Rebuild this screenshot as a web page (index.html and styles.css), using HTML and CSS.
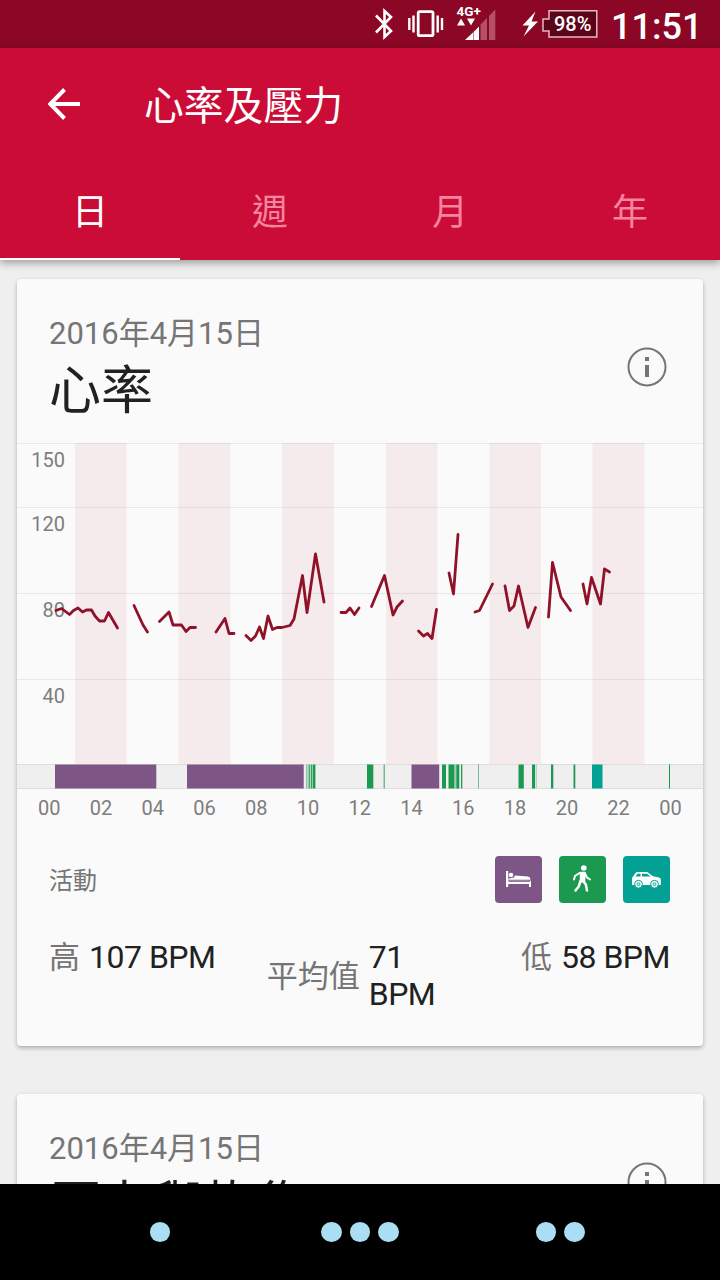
FILE: index.html
```
<!DOCTYPE html>
<html lang="zh-Hant">
<head>
    <meta charset="UTF-8">
    <meta name="viewport" content="width=device-width, initial-scale=1.0">
    <title>心率及壓力</title>
    <link rel="stylesheet" href="styles.css">
</head>
<body>
    <div class="screen">
        <div class="status-bar">
            <svg class="status-icons" width="240" height="48" viewBox="360 0 240 48">
                <!-- bluetooth -->
                <path d="M376 15.5L391 31L384.5 37V11L391 17L376 32.5" fill="none" stroke="#fff" stroke-width="2.6"/>
                <!-- vibrate -->
                <rect x="418.2" y="11.7" width="14.8" height="24" rx="1.5" fill="none" stroke="#fff" stroke-width="2.8"/>
                <path d="M409.3 18v12M413.5 15.5v17M437.7 15.5v17M442 18v12" stroke="#fff" stroke-width="2.4"/>
                <!-- mobile signal -->
                <text x="456.5" y="16" class="network">4G+</text>
                <path d="M457 25.5l4-7 4 7zM467 18.5h8l-4 7z" fill="#fff"/>
                <path d="M465 40l8-7.5V40zM473.5 32l5.500-5.500V40h-5.500z" fill="#fff"/>
                <path d="M480.500 24.500l6.500-6.500V40h-6.500zM489 16l6.300-6.500V40H489z" fill="#b55067"/>
                <!-- battery -->
                <path d="M535.500 11.500L522.500 25.500h6.500l-5.500 11 14.500-15h-6.500z" fill="#fff"/>
                <path d="M549 10.700H596.800V37H549V31H543V19H549z" fill="#5c0519" stroke="#e3b9c3" stroke-width="1.500"/>
                <text x="554" y="31" class="battery">98%</text>
            </svg>
            <span class="clock">11:51</span>
        </div>

        <header class="app-bar">
            <div class="toolbar">
                <svg class="back" width="32" height="32" viewBox="0 0 32 32">
                    <path d="M32 16H3M16.500 1.500L2.200 16l14.300 14.500" fill="none" stroke="#fff" stroke-width="4"/>
                </svg>
                <h1>心率及壓力</h1>
            </div>
            <nav class="tabs">
                <div class="tab active">日</div>
                <div class="tab">週</div>
                <div class="tab">月</div>
                <div class="tab">年</div>
            </nav>
        </header>

        <main class="content">
            <section class="card">
                <div class="card-header">
                    <div>
                        <p class="date">2016年4月15日</p>
                        <h2>心率</h2>
                    </div>
                    <svg class="info" width="40" height="40" viewBox="0 0 40 40">
                        <circle cx="20" cy="20" r="18.500" fill="none" stroke="#757575" stroke-width="2"/>
                        <path d="M18 10h4v4h-4zM18 18h4v12h-4z" fill="#757575"/>
                    </svg>
                </div>

                <svg class="chart" width="686" height="384" viewBox="17 442 686 384">
                    <!-- two-hour bands -->
                    <g fill="#f5ebec">
                        <rect x="75" y="443" width="51.700" height="321"/>
                        <rect x="178.500" y="443" width="52" height="321"/>
                        <rect x="282" y="443" width="52" height="321"/>
                        <rect x="386" y="443" width="51.300" height="321"/>
                        <rect x="489.300" y="443" width="51.700" height="321"/>
                        <rect x="592.500" y="443" width="52" height="321"/>
                    </g>
                    <rect x="17" y="764" width="686" height="25" fill="#efefef"/>
                    <path d="M17 443.500H703M17 507.500H703M17 593.500H703M17 679.500H703M17 764.500H703M17 788.500H703" stroke="#000" stroke-opacity=".07"/>

                    <g class="axis" text-anchor="end">
                        <text x="65" y="467">150</text>
                        <text x="65" y="531">120</text>
                        <text x="65" y="617">80</text>
                        <text x="65" y="702.500">40</text>
                    </g>

                    <!-- heart rate, broken where there is no reading -->
                    <g class="rate">
                        <polyline points="56,610.500 61.500,608.500 69.500,614.500 73.500,610.500 78,608 82.500,612 86.500,610 91.500,610 95,616 99.500,621 104.500,621 108.500,612.500 117.500,628"/>
                        <polyline points="134,605.500 143,625 147.500,632"/>
                        <polyline points="159.500,621.500 169,612 173,625 181.500,625 186,631.500 190,627.500 195.500,627.500"/>
                        <polyline points="216,632 225,618.500 229,633.500 234,633.500"/>
                        <polyline points="246,635.500 251,640.500 255.500,636 259.500,627 263.500,638.500 268,616 272.500,629.500 277,627.500 282,627.500 290,625.500 294,619 302.500,575.500 307,612.500 315.500,554 324,602"/>
                        <polyline points="341,612.500 346,612.500 350,608 354.500,614.500 359,608"/>
                        <polyline points="371.500,606.500 384.500,575.500 393,615 397,607 402.500,601"/>
                        <polyline points="418.500,631 423.500,636 427.500,633.500 432,638.500 436.500,609.500"/>
                        <polyline points="449,573 453.500,594 458,534.500"/>
                        <polyline points="475,612 479.500,610.500 492.500,584"/>
                        <polyline points="505,586 509.500,610.500 514,606 518.500,586 528,627.500 535.500,607.500"/>
                        <polyline points="548.500,617 552.500,562.500 561,597 570.500,610.500"/>
                        <polyline points="583,584 587,604 591.500,577.500 600.500,604 604.500,569 609.500,572"/>
                    </g>

                    <!-- activity strip -->
                    <g fill="#7e5685">
                        <rect x="55" y="764.500" width="101.300" height="24"/>
                        <rect x="187" y="764.500" width="116.700" height="24"/>
                        <rect x="411.500" y="764.500" width="27.700" height="24"/>
                    </g>
                    <g fill="#1c9950">
                        <rect x="306" y="764.500" width="1.500" height="24" opacity=".5"/>
                        <rect x="308.500" y="764.500" width="1.500" height="24" opacity=".8"/>
                        <rect x="310.700" y="764.500" width="1.500" height="24" opacity=".9"/>
                        <rect x="312.700" y="764.500" width="2.300" height="24"/>
                        <rect x="315" y="764.500" width=".8" height="24" opacity=".5"/>
                        <rect x="367" y="764.500" width="6.300" height="24"/>
                        <rect x="383.500" y="764.500" width="1.500" height="24" opacity=".6"/>
                        <rect x="442" y="764.500" width="4" height="24"/>
                        <rect x="448.500" y="764.500" width="5.800" height="24"/>
                        <rect x="454.300" y="764.500" width="2" height="24" opacity=".4"/>
                        <rect x="456.300" y="764.500" width="3" height="24"/>
                        <rect x="461" y="764.500" width="1.300" height="24"/>
                        <rect x="478" y="764.500" width="1" height="24" opacity=".6"/>
                        <rect x="518.500" y="764.500" width="5.300" height="24"/>
                        <rect x="532" y="764.500" width="3" height="24"/>
                        <rect x="535.500" y="764.500" width="1.500" height="24" opacity=".3"/>
                        <rect x="551" y="764.500" width="2.300" height="24"/>
                        <rect x="573.500" y="764.500" width="1.800" height="24"/>
                        <rect x="669" y="764.500" width="1" height="24"/>
                    </g>
                    <rect x="592" y="764.500" width="10.500" height="24" fill="#02a194"/>

                    <g class="axis" text-anchor="middle">
                        <text x="49.200" y="815">00</text>
                        <text x="101" y="815">02</text>
                        <text x="152.700" y="815">04</text>
                        <text x="204.500" y="815">06</text>
                        <text x="256.300" y="815">08</text>
                        <text x="308" y="815">10</text>
                        <text x="359.800" y="815">12</text>
                        <text x="411.600" y="815">14</text>
                        <text x="463.300" y="815">16</text>
                        <text x="515.100" y="815">18</text>
                        <text x="566.900" y="815">20</text>
                        <text x="618.600" y="815">22</text>
                        <text x="670.400" y="815">00</text>
                    </g>
                </svg>

                <div class="activity">
                    <span class="activity-label">活動</span>
                    <div class="legend">
                        <div class="badge sleep">
                            <svg width="47" height="47" viewBox="0 0 47 47" fill="#fff">
                                <path d="M11 15h2.200v9.800H36V31h-2v-3H13.200v3H11z"/>
                                <circle cx="16" cy="19" r="2.300"/>
                                <path d="M13.200 22.800l5.800-1.300 1-2 13 1q2.500.5 2.500 3.300H13.200z"/>
                                <path d="M13.500 25.500H35" stroke="#7e5685" stroke-width=".8"/>
                            </svg>
                        </div>
                        <div class="badge walk">
                            <svg width="47" height="47" viewBox="0 0 47 47" fill="none" stroke="#fff" stroke-linecap="round" stroke-linejoin="round">
                                <circle cx="24.800" cy="12" r="2.800" fill="#fff" stroke="none"/>
                                <path d="M21.500 16.500h4.500l-.5 9-4 .5z" fill="#fff" stroke-width="1.500"/>
                                <path d="M20.500 17L16 20l-1 3.500M26 17.500l2 4 3 2" stroke-width="2"/>
                                <path d="M21.500 25l-1.800 5.500-3.200 4M24.500 25l2.500 4 1 5.500" stroke-width="2.500"/>
                            </svg>
                        </div>
                        <div class="badge drive">
                            <svg width="47" height="47" viewBox="0 0 47 47">
                                <path d="M9 22l3.500-5q.7-.9 1.700-.9h9.300q1 0 2 .8l4.500 3.300 6 1.200q1.800.4 1.800 2V29H9z" fill="#fff"/>
                                <path d="M12.500 20.500l2-2.800h3v2.800zM19 17.700h5l3.500 2.800H19z" fill="#02a194"/>
                                <g fill="#fff" stroke="#02a194" stroke-width="1">
                                    <circle cx="15.500" cy="28.200" r="3.900"/>
                                    <circle cx="31.500" cy="28.200" r="3.900"/>
                                    <circle cx="15.500" cy="28.200" r="1.400"/>
                                    <circle cx="31.500" cy="28.200" r="1.400"/>
                                </g>
                            </svg>
                        </div>
                    </div>
                </div>

                <div class="stats">
                    <div class="stat">
                        <span class="stat-label">高</span>
                        <span class="stat-value">107 BPM</span>
                    </div>
                    <div class="stat average">
                        <span class="stat-label">平均值</span>
                        <span class="stat-value">71 BPM</span>
                    </div>
                    <div class="stat">
                        <span class="stat-label">低</span>
                        <span class="stat-value">58 BPM</span>
                    </div>
                </div>
            </section>

            <section class="card">
                <div class="card-header">
                    <div>
                        <p class="date">2016年4月15日</p>
                        <h2>壓力與恢復</h2>
                    </div>
                    <svg class="info" width="40" height="40" viewBox="0 0 40 40">
                        <circle cx="20" cy="20" r="18.500" fill="none" stroke="#757575" stroke-width="2"/>
                        <path d="M18 10h4v4h-4zM18 18h4v12h-4z" fill="#757575"/>
                    </svg>
                </div>
            </section>
        </main>

        <footer class="nav-bar">
            <div class="dots"><i></i></div>
            <div class="dots"><i></i><i></i><i></i></div>
            <div class="dots"><i></i><i></i></div>
        </footer>
    </div>
</body>
</html>
```
FILE: styles.css
```
* {
    box-sizing: border-box;
}
body {
    margin: 0;
    background-color: #efefef;
    font-family: Roboto, "Noto Sans CJK TC", sans-serif;
    color: #212121;
}
h1, h2, p {
    margin: 0;
    font-weight: 400;
}
svg {
    display: block;
    flex: none;
}
.screen {
    display: flex;
    flex-direction: column;
    width: 720px;
    height: 1280px;
    overflow: hidden;
}
.status-bar {
    display: flex;
    justify-content: flex-end;
    height: 48px;
    padding-right: 18px;
    background-color: #8b0725;
    color: #fff;
    flex: none;
}
.network {
    font-size: 13.5px;
    font-weight: 700;
    fill: #fff;
}
.battery {
    font-size: 20px;
    font-weight: 500;
    fill: #fff;
}
.clock {
    width: 102px;
    padding-left: 11px;
    font-size: 36px;
    font-weight: 500;
    line-height: 54px;
    white-space: nowrap;
}
.app-bar {
    height: 212px;
    background-color: #ca0c36;
    color: #fff;
    box-shadow: 0 3px 8px rgba(0, 0, 0, 0.35);
    flex: none;
    z-index: 1;
}
.toolbar {
    display: flex;
    align-items: center;
    height: 112px;
    padding-left: 48px;
    gap: 64px;
}
h1 {
    padding-top: 5px;
    font-size: 39.8px;
    line-height: 48px;
}
.tabs {
    display: grid;
    grid-template-columns: repeat(4, 1fr);
    height: 100px;
}
.tab {
    padding-top: 27px;
    border-bottom: 2px solid transparent;
    text-align: center;
    font-size: 36px;
    line-height: 52px;
    color: #f4859f;
}
.tab.active {
    color: #fff;
    border-color: #fff;
}
.content {
    display: flex;
    flex-direction: column;
    gap: 48px;
    flex: 1;
    min-height: 0;
    padding: 19px 17px 0;
    overflow: hidden;
}
.card {
    flex: none;
    height: 767px;
    border-radius: 4px;
    background-color: #fafafa;
    box-shadow: 0 2px 4px rgba(0, 0, 0, 0.28);
}
.card-header {
    display: flex;
    justify-content: space-between;
    height: 163px;
    padding: 35px 36.5px 0 32px;
}
.date {
    font-size: 31px;
    line-height: 40px;
    color: #757575;
}
h2 {
    padding-top: 2px;
    font-size: 52px;
    line-height: 72px;
}
.info {
    margin-top: 33px;
}
.axis {
    font-size: 20px;
    fill: #7d7d7d;
}
.rate {
    fill: none;
    stroke: #901229;
    stroke-width: 2.8;
    stroke-linecap: round;
    stroke-linejoin: round;
}
.activity {
    display: flex;
    align-items: center;
    justify-content: space-between;
    height: 47px;
    margin: 30px 33px 0 32px;
}
.activity-label {
    padding-bottom: 2px;
    font-size: 24px;
    color: #757575;
}
.legend {
    display: flex;
    gap: 17px;
}
.badge {
    width: 47px;
    height: 47px;
    border-radius: 4px;
}
.sleep {
    background-color: #7e5685;
}
.walk {
    background-color: #1c9950;
}
.drive {
    background-color: #02a194;
}
.stats {
    display: flex;
    justify-content: space-between;
    align-items: flex-start;
    padding: 36px 33px 0 32px;
}
.stat {
    display: flex;
    align-items: center;
    gap: 9px;
}
.stat-label {
    font-size: 31px;
    line-height: 37px;
    color: #757575;
}
.stat-value {
    font-size: 32px;
    line-height: 37px;
    letter-spacing: -0.5px;
    white-space: nowrap;
}
.average .stat-value {
    width: 101px;
    white-space: normal;
}
.nav-bar {
    display: grid;
    grid-template-columns: repeat(3, 200px);
    justify-content: center;
    align-items: center;
    height: 96px;
    background-color: #000;
    flex: none;
}
.dots {
    display: flex;
    justify-content: center;
    gap: 8px;
}
.dots i {
    width: 20.5px;
    height: 20px;
    border-radius: 50%;
    background-color: #a9def3;
}
```
